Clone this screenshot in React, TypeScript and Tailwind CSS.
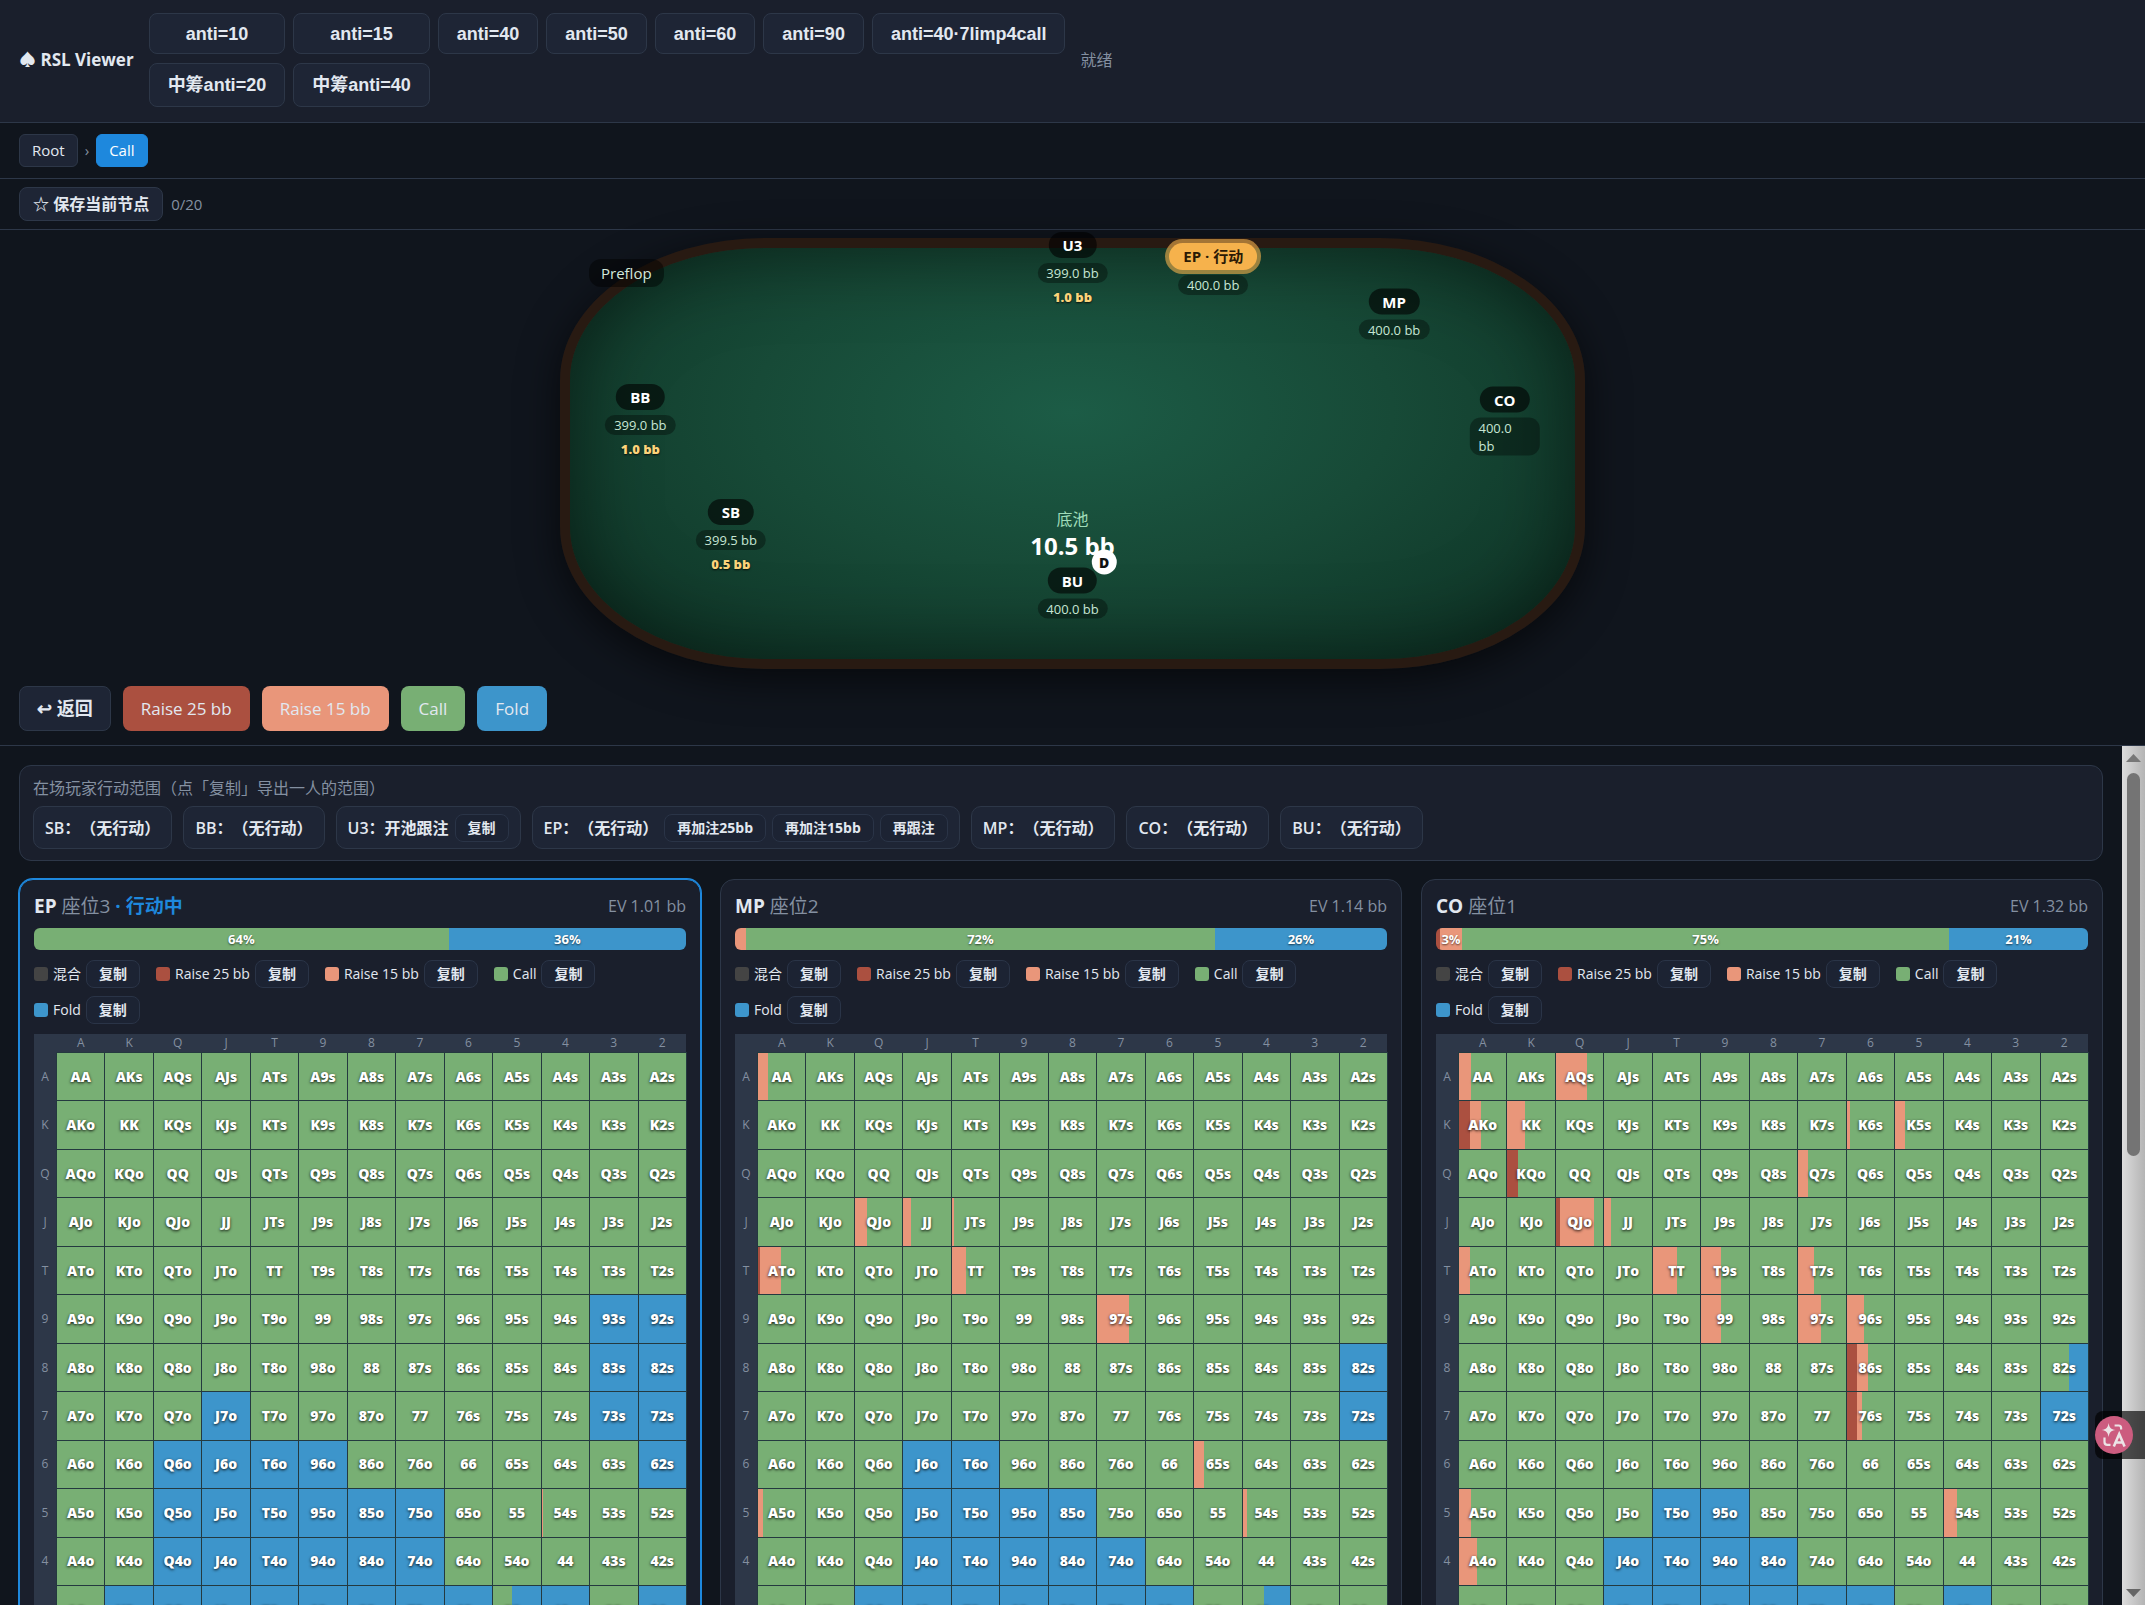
import { useMemo } from 'react';
import type { ReactNode } from 'react';

type Mix = { r25?: number; r15?: number; fold?: number };

interface Player {
  position: string;
  seat: number;
  ev: string;
  active?: boolean;
  summary: { action: Action; width: number; label?: string }[];
  folds: string;
  mixes: Record<string, Mix>;
}

type Action = 'mix' | 'r25' | 'r15' | 'call' | 'fold';

const ACTION_BG: Record<Action, string> = {
  mix: 'bg-[#444444]',
  r25: 'bg-[#ab5040]',
  r15: 'bg-[#e9967a]',
  call: 'bg-[#78af74]',
  fold: 'bg-[#3d95cb]',
};

const RANKS = ['A', 'K', 'Q', 'J', 'T', '9', '8', '7', '6', '5', '4', '3', '2'];

const PRESETS = ['anti=10', 'anti=15', 'anti=40', 'anti=50', 'anti=60', 'anti=90', 'anti=40·7limp4call', '中筹anti=20', '中筹anti=40'];

const LEGEND: { action: Action; label: string }[] = [
  { action: 'mix', label: '混合' },
  { action: 'r25', label: 'Raise 25 bb' },
  { action: 'r15', label: 'Raise 15 bb' },
  { action: 'call', label: 'Call' },
  { action: 'fold', label: 'Fold' },
];

const SEATS = [
  { name: 'U3', stack: '399.0 bb', bet: '1.0 bb', place: 'left-[50%] top-[5%]' },
  { name: 'EP', stack: '400.0 bb', active: true, place: 'left-[64%] top-[5%]' },
  { name: 'MP', stack: '400.0 bb', place: 'left-[82%] top-[16%]' },
  { name: 'CO', stack: '400.0 bb', place: 'left-[93%] top-[42%]' },
  { name: 'BU', stack: '400.0 bb', dealer: true, place: 'left-[50%] top-[84%]' },
  { name: 'SB', stack: '399.5 bb', bet: '0.5 bb', place: 'left-[16%] top-[70%]' },
  { name: 'BB', stack: '399.0 bb', bet: '1.0 bb', place: 'left-[7%] top-[42%]' },
];

const RANGES: { name: string; action?: string; copies: string[] }[] = [
  { name: 'SB', copies: [] },
  { name: 'BB', copies: [] },
  { name: 'U3', action: '开池跟注', copies: ['复制'] },
  { name: 'EP', copies: ['再加注25bb', '再加注15bb', '再跟注'] },
  { name: 'MP', copies: [] },
  { name: 'CO', copies: [] },
  { name: 'BU', copies: [] },
];

const PLAYERS: Player[] = [
  {
    position: 'EP',
    seat: 3,
    ev: '1.01',
    active: true,
    summary: [
      { action: 'call', width: 63.6, label: '64%' },
      { action: 'fold', width: 36.4, label: '36%' },
    ],
    folds:
      '93s 92s 83s 82s J7o 73s 72s Q6o J6o T6o 96o 62s Q5o J5o T5o 95o 85o 75o Q4o J4o T4o 94o 84o 74o K3o Q3o J3o T3o 93o 83o 73o 63o 43o 32s K2o Q2o J2o T2o 92o 82o 72o 62o 52o 42o 32o',
    mixes: { '54s': { r15: 3 }, '53o': { fold: 60 } },
  },
  {
    position: 'MP',
    seat: 2,
    ev: '1.14',
    summary: [
      { action: 'r15', width: 1.7 },
      { action: 'call', width: 71.9, label: '72%' },
      { action: 'fold', width: 26.4, label: '26%' },
    ],
    folds:
      '82s 72s J6o T6o J5o T5o 95o 85o J4o T4o 94o 84o 74o Q3o J3o T3o 93o 83o 73o 63o K2o Q2o J2o T2o 92o 82o 72o 62o 52o 42o 32o',
    mixes: {
      AA: { r15: 22 },
      QJo: { r15: 25 },
      JJ: { r15: 16 },
      JTs: { r15: 4 },
      ATo: { r25: 5, r15: 44 },
      TT: { r15: 30 },
      '97s': { r15: 66 },
      '65s': { r15: 20 },
      A5o: { r15: 11 },
      '54s': { r15: 9 },
      '43o': { fold: 54 },
    },
  },
  {
    position: 'CO',
    seat: 1,
    ev: '1.32',
    summary: [
      { action: 'r25', width: 0.6 },
      { action: 'r15', width: 3.4, label: '3%' },
      { action: 'call', width: 74.7, label: '75%' },
      { action: 'fold', width: 21.3, label: '21%' },
    ],
    folds: '72s T5o 95o J4o T4o 94o 84o J3o T3o 93o 83o 73o 63o 43o Q2o J2o T2o 92o 82o 72o 62o 52o 42o 32o',
    mixes: {
      AA: { r15: 25 },
      AQs: { r15: 66 },
      AKo: { r25: 23, r15: 23 },
      KK: { r15: 36 },
      K6s: { r15: 6 },
      K5s: { r15: 21 },
      KQo: { r25: 22 },
      Q7s: { r15: 21 },
      QJo: { r25: 9, r15: 71 },
      JJ: { r15: 15 },
      ATo: { r15: 23 },
      TT: { r15: 51 },
      T9s: { r15: 42 },
      T7s: { r15: 33 },
      '99': { r15: 42 },
      '97s': { r15: 48 },
      '96s': { r15: 36 },
      '86s': { r25: 21, r15: 23 },
      '82s': { fold: 40 },
      '76s': { r25: 21, r15: 11 },
      A5o: { r15: 25 },
      '54s': { r15: 29 },
      A4o: { r15: 38 },
    },
  },
];

function handName(row: number, col: number) {
  if (row === col) return RANKS[row] + RANKS[col];
  return row < col ? `${RANKS[row]}${RANKS[col]}s` : `${RANKS[col]}${RANKS[row]}o`;
}

function CopyButton({ children }: { children: ReactNode }) {
  return (
    <button className="h-7 rounded-lg border border-[#2a3447] bg-[#1c2333] px-3 text-[14px] leading-5 font-bold whitespace-nowrap">
      {children}
    </button>
  );
}

function Seat({ seat }: { seat: (typeof SEATS)[number] }) {
  return (
    <div className={`absolute flex -translate-x-1/2 -translate-y-1/2 flex-col items-center gap-[5px] ${seat.place}`}>
      {seat.active ? (
        <span className="rounded-full bg-[#f6b24c] px-[14px] text-[15px] leading-[27px] font-bold whitespace-nowrap text-[#2b1a05] ring-4 ring-[#f6b24c]/60">
          {seat.name} · 行动
        </span>
      ) : (
        <span className="rounded-full bg-black/60 px-[14px] text-[15px] leading-[26px] font-bold text-white">{seat.name}</span>
      )}
      <span className="rounded-[11px] bg-black/35 px-[9px] py-px text-[13px] leading-[18px] text-[#c6e6d4]">{seat.stack}</span>
      {seat.bet && (
        <span className="text-[13px] leading-[18px] font-extrabold text-[#fbd37a] [text-shadow:0_1px_2px_rgba(0,0,0,0.8)]">{seat.bet}</span>
      )}
      {seat.dealer && (
        <span className="absolute -top-[18px] -right-[9px] grid size-[25px] place-items-center rounded-full bg-white text-[14px] leading-none font-extrabold text-[#111]">
          D
        </span>
      )}
    </div>
  );
}

function HandCell({ hand, fold, mix }: { hand: string; fold: boolean; mix?: Mix }) {
  return (
    <td
      className={`relative flex aspect-square items-center justify-center overflow-hidden p-0 outline outline-[#24393f] ${
        fold ? ACTION_BG.fold : ACTION_BG.call
      }`}
    >
      {mix && (
        <span className="absolute inset-0 flex">
          <span className={ACTION_BG.r25} style={{ width: `${mix.r25 ?? 0}%` }} />
          <span className={ACTION_BG.r15} style={{ width: `${mix.r15 ?? 0}%` }} />
          <span className={`ml-auto ${ACTION_BG.fold}`} style={{ width: `${mix.fold ?? 0}%` }} />
        </span>
      )}
      <span className="relative text-[14px] leading-5 font-extrabold text-white [text-shadow:0_1px_3px_rgba(0,0,0,0.9)]">{hand}</span>
    </td>
  );
}

function RangeCard({ player }: { player: Player }) {
  const folds = useMemo(() => new Set(player.folds.split(' ')), [player.folds]);

  return (
    <section
      className={`rounded-[14px] border bg-[#1a1f2c] px-[14px] pt-3 ${
        player.active ? 'border-[#1e88dd] ring-1 ring-[#1e88dd]' : 'border-[#2d3748]'
      }`}
    >
      <header className="flex items-center justify-between">
        <h2 className="text-[19px] leading-7 font-bold">
          {player.position} <span className="font-normal text-[#8490a1]">座位{player.seat}</span>
          {player.active && <span className="text-[#1e88dd]"> · 行动中</span>}
        </h2>
        <span className="text-[16px] leading-7 text-[#8490a1]">EV {player.ev} bb</span>
      </header>
      <div className="mt-2 flex h-[22px] overflow-hidden rounded-md">
        {player.summary.map((part) => (
          <div
            key={part.action}
            className={`flex items-center justify-center text-[13px] leading-5 font-bold text-white [text-shadow:0_1px_2px_rgba(0,0,0,0.6)] ${ACTION_BG[part.action]}`}
            style={{ width: `${part.width}%` }}
          >
            {part.label}
          </div>
        ))}
      </div>
      <ul className="mt-[10px] flex flex-wrap gap-x-4 gap-y-2">
        {LEGEND.map((item) => (
          <li key={item.action} className="flex items-center gap-[5px] text-[14px] leading-5">
            <span className={`size-[14px] rounded-[3px] ${ACTION_BG[item.action]}`} />
            {item.label}
            <CopyButton>复制</CopyButton>
          </li>
        ))}
      </ul>
      <table className="mt-[10px] flex flex-col gap-px bg-[#2d3748]">
        <thead>
          <tr className="grid grid-cols-[22px_repeat(13,minmax(0,1fr))] gap-px">
            <td className="p-0" />
            {RANKS.map((rank) => (
              <th key={rank} scope="col" className="p-0 text-[12px] leading-[18px] font-normal text-[#8490a1]">
                {rank}
              </th>
            ))}
          </tr>
        </thead>
        <tbody className="flex flex-col gap-px">
          {RANKS.map((rank, row) => (
            <tr key={rank} className="grid grid-cols-[22px_repeat(13,minmax(0,1fr))] gap-px">
              <th scope="row" className="grid place-items-center p-0 text-[12px] leading-[18px] font-normal text-[#8490a1]">
                {rank}
              </th>
              {RANKS.map((_, col) => {
                const hand = handName(row, col);
                return <HandCell key={hand} hand={hand} fold={folds.has(hand)} mix={player.mixes[hand]} />;
              })}
            </tr>
          ))}
        </tbody>
      </table>
    </section>
  );
}

function TranslateBadge() {
  return (
    <button
      aria-label="Translate"
      className="fixed top-[1411px] right-0 flex h-12 w-[50px] items-center rounded-l-lg bg-black/65"
    >
      <svg viewBox="0 0 38 38" className="size-[38px]">
        <circle cx="19" cy="19" r="19" fill="#cc5c7f" />
        <path d="M13.600 7c.7 4.700 2.300 6.300 7 7-4.700.7-6.300 2.300-7 7-.7-4.700-2.300-6.300-7-7 4.700-.7 6.300-2.300 7-7z" fill="#ece3e6" />
        <path d="M19.600 9.500h4q2.500 0 2.500 2.500v1.500M9.500 21.500v4.500q0 2.800 2.800 2.800h3.200" fill="none" stroke="#ece3e6" strokeWidth="2.200" />
        <path d="M18.800 30.500l5.400-12.500 5.400 12.500M21 26.500h6.500" fill="none" stroke="#ece3e6" strokeWidth="2.600" />
      </svg>
    </button>
  );
}

export default function App() {
  return (
    <div className="flex h-screen flex-col overflow-hidden bg-[#10151d] font-['Open_Sans','Noto_Sans_CJK_SC',sans-serif] text-[#e2e8f0]">
      <header className="flex items-center gap-[15px] border-b border-[#2d3748] bg-[#1a1f2c] px-[19px] pt-[13px] pb-[15px]">
        <h1 className="text-[17px] leading-6 font-bold whitespace-nowrap">♠ RSL Viewer</h1>
        <nav className="grid grid-cols-[repeat(7,auto)] grid-rows-[41px_44px] gap-x-2 gap-y-[9px]">
          {PRESETS.map((preset) => (
            <button
              key={preset}
              className="rounded-lg border border-[#2d3748] bg-[#1e2535] px-[18px] font-['Liberation_Sans','Noto_Sans_CJK_SC',sans-serif] text-[18px] leading-6 font-bold"
            >
              {preset}
            </button>
          ))}
        </nav>
        <span className="text-[16px] leading-6 text-[#8490a1]">就绪</span>
      </header>

      <nav className="flex items-center gap-[7px] border-b border-[#2d3748] px-[19px] py-[11px] text-[15px] leading-[23px]">
        <button className="rounded-md border border-[#2d3748] bg-[#1e2535] px-3 py-1">Root</button>
        <span className="text-[#8490a1]">›</span>
        <button className="rounded-md border border-[#1e88dd] bg-[#1e88dd] px-3 py-1 text-white">Call</button>
      </nav>

      <div className="flex items-center gap-2 border-b border-[#2d3748] px-[19px] py-2 text-[15px] leading-6">
        <button className="rounded-lg border border-[#2d3748] bg-[#1e2535] px-[13px] py-1 text-[16px] font-bold">☆ 保存当前节点</button>
        <span className="text-[#8490a1]">0/20</span>
      </div>

      <main className="relative mx-auto mt-2 h-[431px] w-[1025px] shrink-0 rounded-[20%/33%] border-[10px] border-[#281a12] bg-[radial-gradient(ellipse_at_50%_40%,#1c5c46_0%,#174a37_45%,#0d3023_100%)] shadow-[0_10px_40px_rgba(0,0,0,0.6),inset_0_0_80px_rgba(0,0,0,0.5)]">
        <span className="absolute top-[11px] left-[19px] rounded-xl bg-black/45 px-3 text-[15px] leading-7 text-[#d3e8dc]">Preflop</span>
        <div className="absolute top-[64%] left-1/2 -translate-x-1/2 text-center">
          <p className="text-[16px] leading-4 text-[#9fdcb9]">底池</p>
          <p className="text-[24px] leading-[38px] font-bold whitespace-nowrap text-white">10.5 bb</p>
        </div>
        {SEATS.map((seat) => (
          <Seat key={seat.name} seat={seat} />
        ))}
      </main>

      <div className="mt-[17px] flex gap-3 border-b border-[#2d3748] px-[19px] pb-[14px] text-[17px] leading-[25px]">
        <button className="rounded-lg border border-[#2d3748] bg-[#1e2535] px-[17px] py-[9px] text-[18px] font-bold">↩ 返回</button>
        <button className={`rounded-lg px-[18px] py-[10px] ${ACTION_BG.r25}`}>Raise 25 bb</button>
        <button className={`rounded-lg px-[18px] py-[10px] ${ACTION_BG.r15}`}>Raise 15 bb</button>
        <button className={`rounded-lg px-[18px] py-[10px] ${ACTION_BG.call}`}>Call</button>
        <button className={`rounded-lg px-[18px] py-[10px] ${ACTION_BG.fold}`}>Fold</button>
      </div>

      <div className="flex min-h-0 flex-1">
        <div className="min-w-0 flex-1 overflow-y-auto p-[19px] [scrollbar-width:none]">
          <section className="rounded-xl border border-[#2d3748] bg-[#1a1f2c] px-[13px] pt-[10px] pb-[11px]">
            <h2 className="text-[16px] leading-6 text-[#8490a1]">在场玩家行动范围（点「复制」导出一人的范围）</h2>
            <div className="mt-[6px] flex flex-wrap gap-[11px]">
              {RANGES.map((range) => (
                <div key={range.name} className="flex h-[43px] items-center gap-[6px] rounded-[10px] border border-[#2d3748] bg-[#1e2535] px-[11px]">
                  <span className="flex text-[16px] leading-6 font-semibold whitespace-nowrap">
                    <span>{range.name}：</span>
                    <span>{range.action ?? '（无行动）'}</span>
                  </span>
                  {range.copies.map((copy) => (
                    <CopyButton key={copy}>{copy}</CopyButton>
                  ))}
                </div>
              ))}
            </div>
          </section>
          <div className="mt-[18px] grid grid-cols-3 gap-[19px]">
            {PLAYERS.map((player) => (
              <RangeCard key={player.position} player={player} />
            ))}
          </div>
        </div>
        <div aria-hidden="true" className="flex w-[23px] flex-col items-center justify-between bg-linear-to-r from-[#dcdcdc] to-[#b4b4b4] py-2">
          <svg viewBox="0 0 15 8" className="mb-[11px] h-2 w-[15px]">
            <path d="M0 8L7.500 0L15 8z" fill="#777" />
          </svg>
          <div className="mb-auto h-[383px] w-[13px] rounded-full bg-[#747474]" />
          <svg viewBox="0 0 15 8" className="h-2 w-[15px]">
            <path d="M0 0L7.500 8L15 0z" fill="#666" />
          </svg>
        </div>
      </div>
      <TranslateBadge />
    </div>
  );
}
